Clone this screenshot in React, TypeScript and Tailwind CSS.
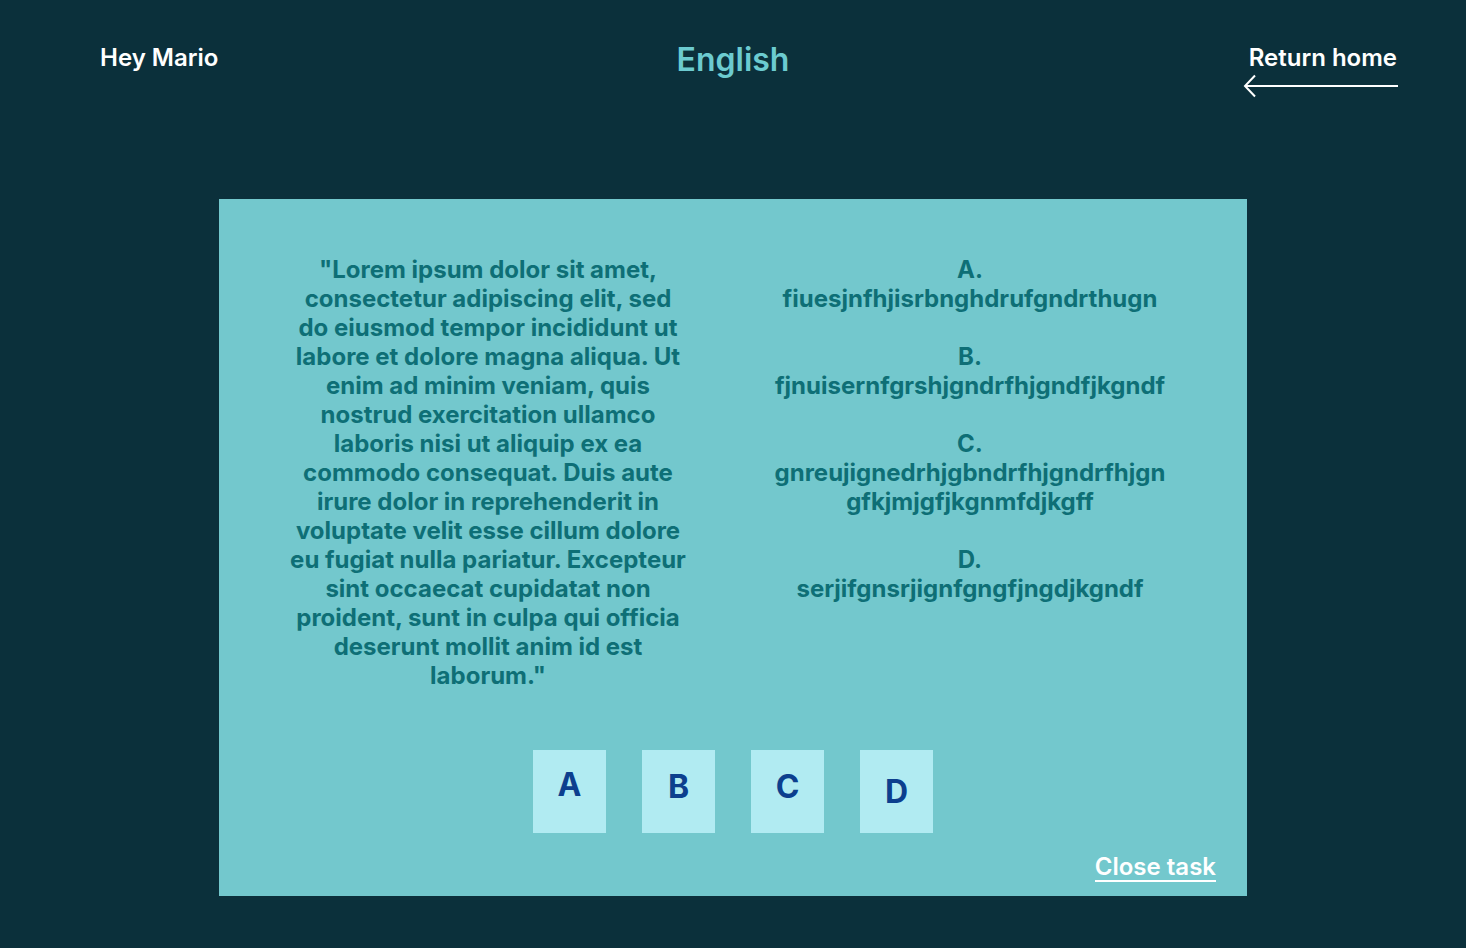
const options = [
  { label: "A.", text: "fiuesjnfhjisrbnghdrufgndrthugn" },
  { label: "B.", text: "fjnuisernfgrshjgndrfhjgndfjkgndf" },
  { label: "C.", text: "gnreujignedrhjgbndrfhjgndrfhjgngfkjmjgfjkgnmfdjkgff" },
  { label: "D.", text: "serjifgnsrjignfgngfjngdjkgndf" },
];

const answers = [
  { key: "A", pad: "pt-[19px]" },
  { key: "B", pad: "pt-[21px]" },
  { key: "C", pad: "pt-[21px]" },
  { key: "D", pad: "pt-[26px]" },
];

export default function App() {
  return (
    <div
      className="min-h-[948px] bg-[#0b303b] font-semibold"
      style={{ fontFamily: "Inter, 'Noto Sans', sans-serif" }}
    >
      {/* header */}
      <header className="grid grid-cols-3 items-start px-[67px] pt-[43px]">
        <span className="pl-[33px] text-white text-[24px] leading-[29px]">Hey Mario</span>
        <h1 className="text-center text-[#6ccbd0] text-[32px] leading-[39px] -mt-[3px]">
          English
        </h1>
        <div className="flex flex-col items-end">
          <span className="text-white text-[24px] leading-[29px] pr-[2px]">Return home</span>
          <svg width="156" height="24" viewBox="0 0 156 24" className="mt-[2px]">
            <path d="M2 12H155" stroke="white" strokeWidth="2" fill="none" />
            <path d="M12 1.5L2 12L12 22.5" stroke="white" strokeWidth="2" fill="none" />
          </svg>
        </div>
      </header>

      {/* task card */}
      <main className="mx-[219px] mt-[101px] h-[697px] bg-[#73c8cd] flex flex-col">
        <div className="flex pl-[69px] pt-[56px] gap-[82px] text-[#0e6f76] font-bold text-[24px] leading-[29px] text-center">
          <p className="w-[400px]">
            "Lorem ipsum dolor sit amet, consectetur adipiscing elit, sed do eiusmod tempor
            incididunt ut labore et dolore magna aliqua. Ut enim ad minim veniam, quis nostrud
            exercitation ullamco laboris nisi ut aliquip ex ea commodo consequat. Duis aute irure
            dolor in reprehenderit in voluptate velit esse cillum dolore eu fugiat nulla pariatur.
            Excepteur sint occaecat cupidatat non proident, sunt in culpa qui officia deserunt
            mollit anim id est laborum."
          </p>
          <div className="w-[400px] flex flex-col gap-[29px]">
            {options.map((o) => (
              <div key={o.label} className="break-all">
                <div>{o.label}</div>
                <div>{o.text}</div>
              </div>
            ))}
          </div>
        </div>

        <div className="flex justify-center gap-[36px] mt-[60px]">
          {answers.map((a) => (
            <button
              key={a.key}
              className={`w-[73px] h-[83px] bg-[#b1ebf2] text-[#0c3f8e] font-bold text-[32px] leading-[32px] flex justify-center ${a.pad}`}
            >
              {a.key}
            </button>
          ))}
        </div>

        <div className="mt-auto flex justify-end pr-[31px] pb-[14px]">
          <span className="text-white text-[24px] leading-[26px] border-b-2 border-white">
            Close task
          </span>
        </div>
      </main>
    </div>
  );
}
